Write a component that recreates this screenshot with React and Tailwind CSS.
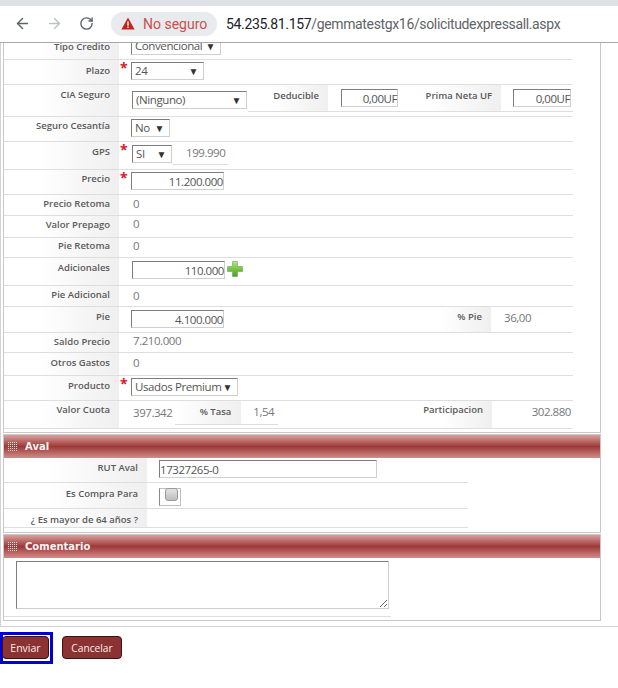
import React from "react";
import { ArrowLeft, ArrowRight, RotateCw } from "lucide-react";

const fieldBorder = "border border-t-[#7d7d7d] border-l-[#7d7d7d] border-r-[#cfcfcf] border-b-[#cfcfcf] bg-white";

function Label({ children, w = "w-[115px]", pt = "pt-[3px]" }) {
  return (
    <div className={`${w} ${pt} shrink-0 self-stretch pr-[9px] text-right text-[9.5px] leading-[14px] font-semibold text-[#5a5a5a] bg-gradient-to-r from-white from-30% to-[#efefef] whitespace-nowrap`}>
      {children}
    </div>
  );
}

function Star({ show }) {
  return <div className="w-[12px] shrink-0 self-start pl-[1px] pt-[1px] text-[14px] leading-[14px] font-bold text-[#d0202a]">{show ? "*" : ""}</div>;
}

function Row({ h, children, cls = "" }) {
  return <div className={`flex ${h} shrink-0 border-b border-[#dedede] ${cls}`}>{children}</div>;
}

function Select({ w, mt, children, ml = "ml-0" }) {
  return (
    <div className={`${w} ${mt} ${ml} h-[18px] flex items-center justify-between shrink-0 pl-[3px] pr-[5px] text-[11.5px] leading-[14px] tracking-[-0.4px] whitespace-nowrap text-[#555] ${fieldBorder}`}>
      <span>{children}</span>
      <span className="text-[10px] leading-[10px] text-[#333]">▼</span>
    </div>
  );
}

function Field({ w, mt, children, ml = "ml-0" }) {
  return (
    <div className={`${w} ${mt} ${ml} h-[18px] shrink-0 text-right text-[11.5px] leading-[17px] tracking-[-0.45px] text-[#555] ${fieldBorder}`}>{children}</div>
  );
}

function Value({ children, w = "w-auto", ml = "ml-[2px]", pt = "pt-[3px]", align = "text-left" }) {
  return <div className={`${w} ${ml} ${pt} ${align} shrink-0 text-[11.5px] leading-[15px] tracking-[-0.45px] text-[#777]`}>{children}</div>;
}

function Header({ children }) {
  return (
    <div className="flex h-[23px] items-center w-[596px] bg-gradient-to-b from-[#d9a0a0] via-[#9c3838] to-[#d28c8c]">
      <svg width="9" height="9" viewBox="0 0 9 9" className="ml-[4px]">
        <g fill="#e8d4d4">
          {[0, 2, 4, 6, 8].flatMap((y) => [0, 2, 4, 6, 8].map((x) => <rect key={`${x}-${y}`} x={x} y={y} width="1" height="1" />))}
        </g>
      </svg>
      <span className="ml-[8px] font-['DejaVu_Sans',sans-serif] text-[10px] font-bold text-[#fbf3f3]">{children}</span>
    </div>
  );
}

export default function App() {
  return (
    <div className="w-[618px] h-[688px] overflow-hidden bg-white font-['Open_Sans',sans-serif]">
      <div className="h-[6px] bg-[#dee1e6]" />
      <div className="flex h-[37px] items-center border-b border-[#a8a8a8] bg-white pb-[1px]">
        <ArrowLeft size={17} strokeWidth={2} className="ml-[14px] text-[#5f6368]" />
        <ArrowRight size={17} strokeWidth={2} className="ml-[15px] text-[#bdc1c6]" />
        <RotateCw size={15} strokeWidth={2.2} className="ml-[16px] text-[#5f6368]" />
        <div className="ml-[17px] flex h-[24px] w-[106px] items-center rounded-full bg-[#e8eaed]">
          <svg width="14" height="13" viewBox="0 0 14 13" className="ml-[10px]">
            <path d="M7 0.5 L13.6 12.5 L0.4 12.5 Z" fill="#c5221f" />
            <rect x="6.3" y="4.5" width="1.4" height="4.2" fill="#fff" />
            <rect x="6.3" y="9.5" width="1.4" height="1.4" fill="#fff" />
          </svg>
          <span className="ml-[8px] font-['Roboto',sans-serif] text-[14px] leading-[20px] text-[#c9504c] whitespace-nowrap">No seguro</span>
        </div>
        <div className="ml-[9px] font-['Roboto',sans-serif] text-[14px] leading-[20px] tracking-[-0.35px] text-[#5f6368] whitespace-nowrap">
          <span className="text-[#202124]">54.235.81.157</span>/gemmatestgx16/solicitudexpressall.aspx
        </div>
      </div>

      <div className="border-l border-[#d4d4d4] h-[584px] border-b">
        <div className="ml-[2px] w-[598px] border-x border-b border-[#c8c8c8] pb-[3px]">
          <div className="w-[569px]">
            <Row h="h-[17px]" cls="overflow-hidden">
              <Label pt="pt-0"><div className="-mt-[3px]">Tipo Credito</div></Label>
              <Star />
              <Select w="w-[90px]" mt="-mt-[6px]">Convencional</Select>
            </Row>
            <Row h="h-[25px]">
              <Label pt="pt-[4px]">Plazo</Label>
              <Star show />
              <Select w="w-[73px]" mt="mt-[2px]">24</Select>
            </Row>
            <Row h="h-[32px]">
              <Label>CIA Seguro</Label>
              <Star />
              <Select w="w-[115px]" mt="mt-[6px]" ml="ml-px">(Ninguno)</Select>
              <div className="flex h-[27px] flex-1 border-b border-[#dedede] ml-px">
                <Label w="w-[80px]" pt="pt-[4px]">Deducible</Label>
                <Field w="w-[57px]" mt="mt-[4px]" ml="ml-[13px]">0,00UF</Field>
                <Label w="w-[103px]" pt="pt-[4px]">Prima Neta UF</Label>
                <Field w="w-[58px]" mt="mt-[4px]" ml="ml-[12px]">0,00UF</Field>
              </div>
            </Row>
            <Row h="h-[25px]">
              <Label pt="pt-[2px]">Seguro Cesantía</Label>
              <Star />
              <Select w="w-[39px]" mt="mt-[2px]">No</Select>
            </Row>
            <Row h="h-[28px]">
              <Label>GPS</Label>
              <Star show />
              <Select w="w-[40px]" mt="mt-[3px]" ml="ml-px">SI</Select>
              <div className="ml-px h-[23px] w-[56px] border-b border-[#dedede] pl-[13px] pt-[3px] text-[11.5px] leading-[15px] tracking-[-0.45px] text-[#777]">199.990</div>
            </Row>
            <Row h="h-[25px]">
              <Label pt="pt-[2px]">Precio</Label>
              <Star show />
              <Field w="w-[93px]" mt="mt-[2px]">11.200.000</Field>
            </Row>
            <Row h="h-[21px]"><Label pt="pt-[2px]">Precio Retoma</Label><Star /><Value pt="pt-[1px]">0</Value></Row>
            <Row h="h-[22px]"><Label pt="pt-[2px]">Valor Prepago</Label><Star /><Value pt="pt-0">0</Value></Row>
            <Row h="h-[20px]"><Label pt="pt-[1px]">Pie Retoma</Label><Star /><Value pt="pt-0">0</Value></Row>
            <Row h="h-[28px]">
              <Label>Adicionales</Label>
              <Star />
              <Field w="w-[93px]" mt="mt-[3px]" ml="ml-px">110.000</Field>
              <svg width="16" height="16" viewBox="0 0 16 16" className="ml-[2px] mt-[3px]">
                <defs>
                  <linearGradient id="plusGreen" x1="0" y1="0" x2="0" y2="1">
                    <stop offset="0" stopColor="#b5e58a" />
                    <stop offset="0.5" stopColor="#76c442" />
                    <stop offset="1" stopColor="#4e9e2a" />
                  </linearGradient>
                </defs>
                <path d="M5.5 0.5h5v5h5v5h-5v5h-5v-5h-5v-5h5z" fill="url(#plusGreen)" stroke="#6aa84f" strokeWidth="0.6" />
              </svg>
            </Row>
            <Row h="h-[21px]"><Label pt="pt-[2px]">Pie Adicional</Label><Star /><Value pt="pt-[2px]">0</Value></Row>
            <Row h="h-[26px]">
              <Label>Pie</Label>
              <Star />
              <Field w="w-[93px]" mt="mt-[3px]">4.100.000</Field>
              <div className="flex-1" />
              <Label w="w-[71px]">% Pie</Label>
              <Value ml="ml-[13px]" w="w-[69px]" pt="pt-[3px]">36,00</Value>
            </Row>
            <Row h="h-[20px]"><Label pt="pt-[2px]">Saldo Precio</Label><Star /><Value pt="pt-0">7.210.000</Value></Row>
            <Row h="h-[23px]"><Label>Otros Gastos</Label><Star /><Value pt="pt-[2px]">0</Value></Row>
            <Row h="h-[25px]">
              <Label>Producto</Label>
              <Star show />
              <Select w="w-[107px]" mt="mt-[2px]">Usados Premium</Select>
            </Row>
            <Row h="h-[28px]">
              <Label pt="pt-[2px]">Valor Cuota</Label>
              <Star />
              <Value pt="pt-[4px]">397.342</Value>
              <div className="ml-[3px] flex h-[24px] w-[103px] border-b border-[#dedede]">
                <div className="w-[66px] h-[23px] pt-[4px] pr-[10px] text-right text-[9.5px] leading-[14px] font-semibold text-[#5a5a5a] bg-gradient-to-r from-white to-[#efefef]">% Tasa</div>
                <Value ml="ml-[12px]" pt="pt-[3px]">1,54</Value>
              </div>
              <div className="flex-1" />
              <Label w="w-[71px]" pt="pt-[2px]">Participacion</Label>
              <div className="w-[81px] shrink-0 pr-[2px] pt-[3px] text-right text-[11.5px] leading-[15px] tracking-[-0.45px] text-[#777]">302.880</div>
            </Row>
          </div>
        </div>

        <div className="ml-[2px] w-[598px] mt-px border-x border-y border-[#c8c8c8] pb-[3px] h-[99px]">
          <Header>Aval</Header>
          <div className="w-[464px]">
            <Row h="h-[25px]">
              <Label w="w-[143px]">RUT Aval</Label>
              <div className={`ml-[12px] mt-[2px] h-[18px] w-[218px] text-[11.5px] leading-[17px] tracking-[-0.45px] text-[#555] ${fieldBorder}`}>17327265-0</div>
            </Row>
            <Row h="h-[26px]">
              <Label w="w-[143px]" pt="pt-[4px]">Es Compra Para</Label>
              <div className="ml-[12px] mt-[5px] flex h-[18px] w-[22px] justify-center border border-[#bdbdbd] border-l-[#888]">
                <div className="-mt-px ml-[3px] h-[13px] w-[13px] rounded-[3px] border border-[#9a9a9a] bg-gradient-to-b from-[#e4e4e4] to-[#bdbdbd]" />
              </div>
            </Row>
            <Row h="h-[19px]"><Label w="w-[143px]" pt="pt-[4px]">¿ Es mayor de 64 años ?</Label></Row>
          </div>
        </div>

        <div className="ml-[2px] w-[598px] mt-px border-x border-y border-[#c8c8c8] h-[87px]">
          <Header>Comentario</Header>
          <textarea defaultValue="" className="ml-[12px] mt-[3px] block h-[48px] w-[373px] border border-t-[#7d7d7d] border-l-[#7d7d7d] border-r-[#cfcfcf] border-b-[#cfcfcf] bg-white" />
          <div className="mt-[7px] w-[387px] border-b border-[#dedede]" />
        </div>
      </div>

      <div className="flex items-start pt-[5px]">
        <div className="border-[3px] border-[#0000d8] p-[1px] h-[32px] w-[53px]">
          <button className="block h-[23px] w-[47px] -ml-[2px] rounded-[4px] border border-[#3c1212] bg-[#8b3232] text-[10.5px] leading-[20px] text-[#fbeeee]">Enviar</button>
        </div>
        <button className="ml-[9px] mt-[4px] h-[23px] w-[60px] rounded-[4px] border border-[#3c1212] bg-[#8b3232] text-[10.2px] leading-[20px] text-[#fbeeee]">Cancelar</button>
      </div>
    </div>
  );
}
